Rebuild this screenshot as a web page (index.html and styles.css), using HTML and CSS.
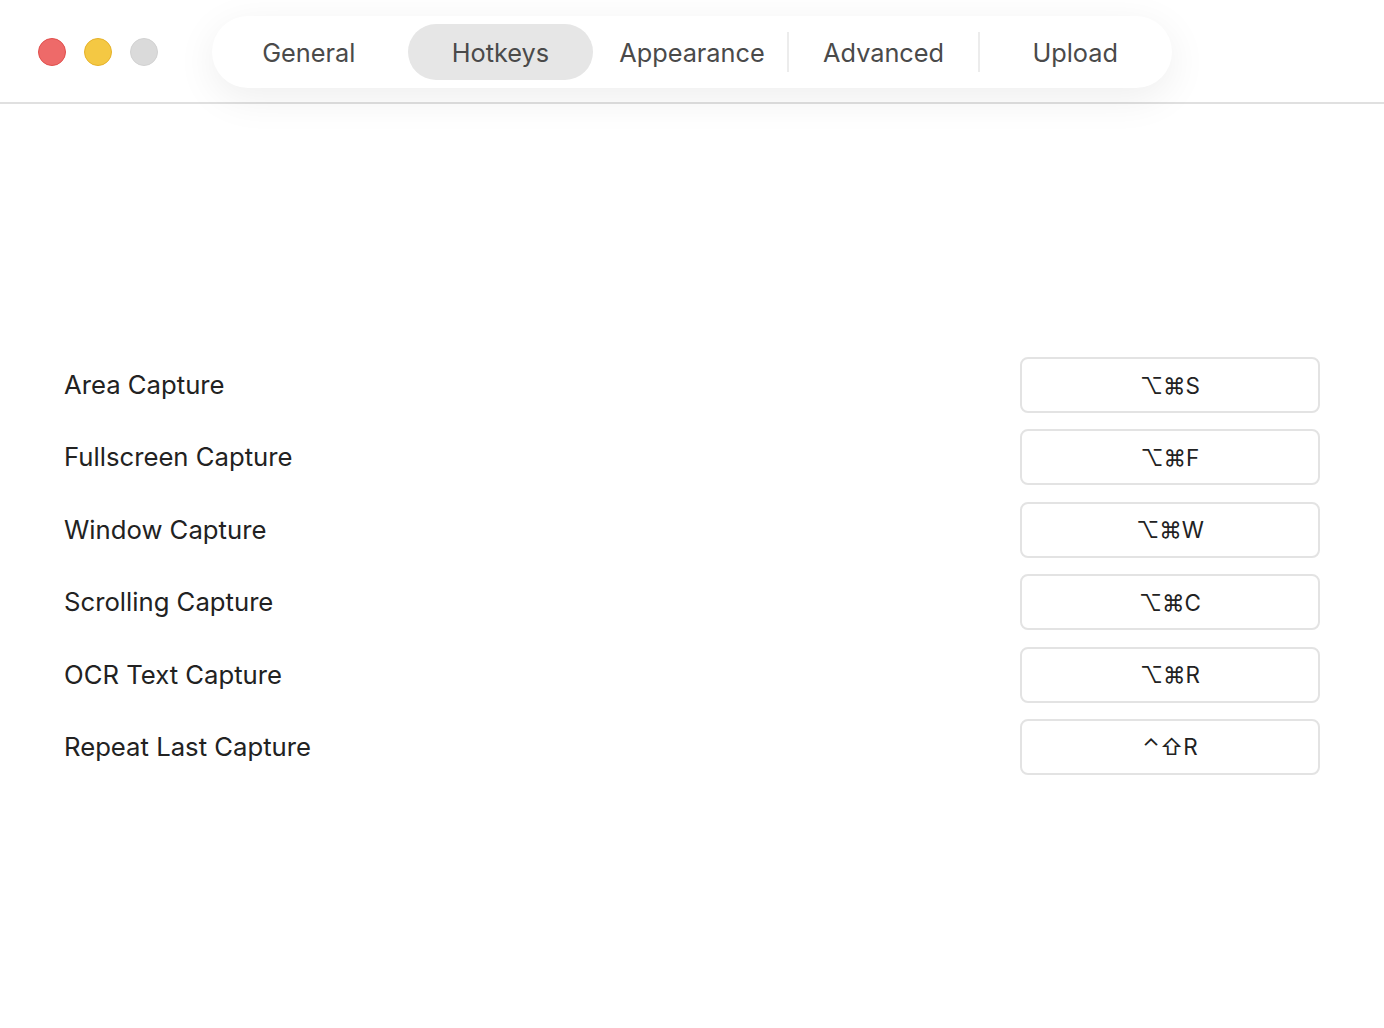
FILE: index.html
```html
<!DOCTYPE html>
<html lang="en">
<head>
    <meta charset="UTF-8">
    <title>Preferences — Hotkeys</title>
    <link rel="stylesheet" href="styles.css">
</head>
<body>
    <header class="toolbar">
        <div class="lights">
            <span class="light close"></span>
            <span class="light minimize"></span>
            <span class="light zoom"></span>
        </div>
        <nav class="tabs">
            <a class="tab">General</a>
            <a class="tab active">Hotkeys</a>
            <a class="tab">Appearance</a>
            <span class="divider"></span>
            <a class="tab">Advanced</a>
            <span class="divider"></span>
            <a class="tab">Upload</a>
        </nav>
    </header>

    <main class="hotkeys">
        <div class="row">
            <span class="label">Area Capture</span>
            <button class="shortcut">⌥⌘S</button>
        </div>
        <div class="row">
            <span class="label">Fullscreen Capture</span>
            <button class="shortcut">⌥⌘F</button>
        </div>
        <div class="row">
            <span class="label">Window Capture</span>
            <button class="shortcut">⌥⌘W</button>
        </div>
        <div class="row">
            <span class="label">Scrolling Capture</span>
            <button class="shortcut">⌥⌘C</button>
        </div>
        <div class="row">
            <span class="label">OCR Text Capture</span>
            <button class="shortcut">⌥⌘R</button>
        </div>
        <div class="row">
            <span class="label">Repeat Last Capture</span>
            <button class="shortcut">⌃⇧R</button>
        </div>
    </main>
</body>
</html>
```

FILE: styles.css
```css
body {
    margin: 0;
    background-color: #fff;
    font-family: Inter, "Noto Sans", "DejaVu Sans", sans-serif;
    color: #222;
}

/* window toolbar */
.toolbar {
    display: flex;
    align-items: center;
    height: 72px;
    padding: 16px 0 14px 38px;
    border-bottom: 2px solid #e0e0e0;
}
.lights {
    display: flex;
    gap: 18px;
}
.light {
    width: 26px;
    height: 26px;
    border-radius: 50%;
    border: 1px solid transparent;
}
.light.close {
    background-color: #ee6a69;
    border-color: #e14f4c;
}
.light.minimize {
    background-color: #f4c843;
    border-color: #e6b22a;
}
.light.zoom {
    background-color: #dadada;
    border-color: #d2d2d2;
}

.tabs {
    position: relative;
    z-index: 1;
    display: flex;
    align-items: center;
    gap: 6px;
    width: 960px;
    height: 72px;
    margin-left: 54px;
    padding: 8px 4px;
    box-sizing: border-box;
    background-color: #fff;
    border-radius: 36px;
    box-shadow: 0 10px 40px rgba(0, 0, 0, 0.07);
}
.tab {
    flex: 1;
    height: 56px;
    line-height: 58px;
    text-align: center;
    font-size: 25.3px;
    color: #4a4a4a;
    border-radius: 28px;
    cursor: pointer;
}
.tab.active {
    background-color: #e6e6e6;
}
.divider {
    width: 2px;
    height: 40px;
    margin: 0 -4px;
    background-color: #ececec;
}

/* shortcut list */
.hotkeys {
    display: flex;
    flex-direction: column;
    gap: 16.4px;
    padding: 253px 64px 0;
}
.row {
    display: flex;
    justify-content: space-between;
    align-items: center;
    height: 56px;
}
.label {
    font-size: 25.7px;
    line-height: 58px;
    color: #222;
}
.shortcut {
    width: 300px;
    height: 56px;
    background-color: #fff;
    border: 2px solid #e3e3e3;
    border-radius: 8px;
    font-family: Inter, "DejaVu Sans", sans-serif;
    font-size: 22.5px;
    color: #222;
    cursor: pointer;
}
```
